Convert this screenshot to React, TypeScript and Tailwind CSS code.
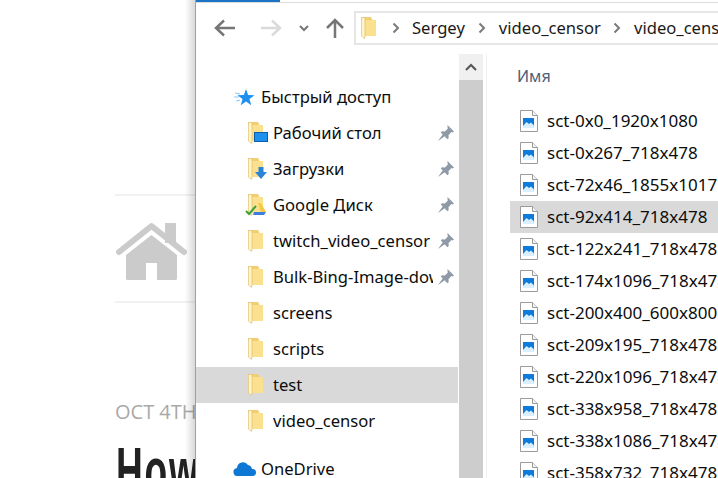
const UI_FONT = { fontFamily: '"Noto Sans", "Open Sans", sans-serif' };

function FolderIcon() {
  return (
    <svg width="15" height="22" viewBox="0 0 15 22" className="shrink-0">
      <path d="M0 0h10l1.500 3H15v16H4z" fill="#f0cf74" />
      <path d="M4 3h11v16H4z" fill="#fbe08f" />
      <path d="M.4.500h3.600v18.500l-.4 2.500L.4 19z" fill="#fff3cc" stroke="#e3c470" strokeWidth="0.8" />
    </svg>
  );
}

function PinIcon() {
  return (
    <svg width="16" height="16" viewBox="0 0 16 16" className="shrink-0">
      <path d="M9.500 0 16 6.500l-1.200 1-1.300-.4-3 3 .2 2.900-1.200 1.200-6.700-6.700L4 6.300l2.900.2 3-3-.4-1.300z" fill="#8f9aa6" />
      <path d="M5 9 0 16l7-5z" fill="#8f9aa6" />
    </svg>
  );
}

function FileIcon() {
  return (
    <svg width="18" height="22" viewBox="0 0 18 22" className="shrink-0">
      <path d="M.5.500h12l5 5v16H.500z" fill="#fff" stroke="#9b9b9b" />
      <path d="M12.500.500v5h5" fill="#f1f1f1" stroke="#9b9b9b" />
      <rect x="3" y="8" width="11" height="10" fill="#0f7bd9" />
      <path d="M3 16l3.500-4 2.500 2 2-1.500 3 3V18H3z" fill="#d9efff" />
    </svg>
  );
}

function Chevron({ className }: { className?: string }) {
  return (
    <svg width="8" height="12" viewBox="0 0 8 12" fill="none" stroke="#7a7a7a" strokeWidth="2" className={`shrink-0 ${className ?? ''}`}>
      <path d="m1.500 1.500 4.500 4.500-4.500 4.500" />
    </svg>
  );
}

function NavRow({ label, icon, pinned, selected }: { label: string; icon?: React.ReactNode; pinned?: boolean; selected?: boolean }) {
  return (
    <div className={`flex h-9 shrink-0 items-center pl-[52px] pr-[4px] ${selected ? 'bg-[#d9d9d9]' : ''}`}>
      <span className="flex w-[25px] shrink-0 items-center">{icon ?? <FolderIcon />}</span>
      <span className="mr-[5px] flex-1 overflow-hidden whitespace-nowrap text-[16.6px] text-[#0c0c0c]">{label}</span>
      {pinned && <PinIcon />}
    </div>
  );
}

const files = [
  'sct-0x0_1920x1080',
  'sct-0x267_718x478',
  'sct-72x46_1855x1017',
  'sct-92x414_718x478',
  'sct-122x241_718x478',
  'sct-174x1096_718x478',
  'sct-200x400_600x800',
  'sct-209x195_718x478',
  'sct-220x1096_718x478',
  'sct-338x958_718x478',
  'sct-338x1086_718x478',
  'sct-358x732_718x478',
];

export default function App() {
  return (
    <div className="flex h-[478px] w-[718px] overflow-hidden bg-white" style={UI_FONT}>
      {/* page behind the explorer window */}
      <div className="w-[195px] shrink-0 overflow-hidden pl-[115px] pt-[194px]">
        <div className="flex h-[109px] items-center border-y-2 border-[#f1f1f1] pl-px pt-[5px]">
          <svg width="71" height="58" viewBox="0 0 71 58">
            <path d="M3 30 35.500 4 68 30" fill="none" stroke="#cbcbcb" strokeWidth="6" strokeLinecap="round" strokeLinejoin="round" />
            <path d="M49 1h11v20H49z" fill="#cbcbcb" />
            <path d="M10 33 35.500 13 61 33v23.500a1.500 1.500 0 0 1-1.500 1.500H41V41H30v17H11.500A1.500 1.500 0 0 1 10 56.500z" fill="#cbcbcb" />
          </svg>
        </div>
        <div className="mt-[97px] whitespace-nowrap text-[20px] leading-6 text-[#a9a9a9]" style={{ fontFamily: '"Open Sans", sans-serif' }}>OCT 4TH</div>
        <div className="ml-px mt-[11px] origin-left scale-x-[0.58] whitespace-nowrap text-[64px] font-bold leading-[72px] tracking-[3px] text-[#222]" style={{ fontFamily: '"Liberation Sans", sans-serif' }}>How</div>
      </div>

      {/* explorer window */}
      <div className="relative flex flex-1 flex-col border-l border-[#a0a0a0]">
        <div className="absolute inset-y-0 -left-[11px] w-[10px] bg-gradient-to-r from-transparent to-black/15" />
        <div className="h-[2px] w-[84px] bg-[#1a73c4]" />
        <div className="h-px bg-[#dcdcdc]" />
        <div className="mt-[8px] flex h-[34px] shrink-0 items-center">
          <div className="flex w-[158px] shrink-0 items-center pl-[18px]">
            <svg width="22" height="18" viewBox="0 0 22 18" fill="none" stroke="#767676" strokeWidth="2.500">
              <path d="M21 9H2M10 1.500 2 9l8 7.500" />
            </svg>
            <svg width="22" height="18" viewBox="0 0 22 18" fill="none" stroke="#dadada" strokeWidth="2.500" className="ml-[24px]">
              <path d="M1 9h19M12 1.500 20 9l-8 7.500" />
            </svg>
            <svg width="10" height="7" viewBox="0 0 10 7" fill="none" stroke="#767676" strokeWidth="2" className="ml-[17px]">
              <path d="m1 1 4 4 4-4" />
            </svg>
            <svg width="18" height="20" viewBox="0 0 18 20" fill="none" stroke="#767676" strokeWidth="2.500" className="ml-[17px]">
              <path d="M9 20V2M1 10l8-8 8 8" />
            </svg>
          </div>
          <div className="flex h-[34px] flex-1 items-center overflow-hidden whitespace-nowrap border-y-2 border-l-2 border-[#e5e5e5] pl-[5px] text-[16.6px] text-[#1a1a1a]">
            <FolderIcon />
            <Chevron className="ml-[16px] mr-[12px]" />
            <span>Sergey</span>
            <Chevron className="ml-[13px] mr-[13px]" />
            <span>video_censor</span>
            <Chevron className="ml-[12px] mr-[13px]" />
            <span>video_censor</span>
          </div>
        </div>

        <div className="flex min-h-0 flex-1 pt-[9px]">
          <div className="flex w-[262px] shrink-0 flex-col pt-[25px]">
            <div className="flex h-9 shrink-0 items-center pl-[38px]">
              <svg width="22" height="18" viewBox="0 0 22 18" className="mr-[5px] shrink-0">
                <path d="M12 1l2.100 6.100 6.500.1-5.200 3.900 1.900 6.200-5.300-3.700-5.300 3.700 1.900-6.200-5.200-3.900 6.500-.1z" fill="#1e90ee" />
                <path d="M1 5l5 1M0 9h5M2 13l4-1" stroke="#8cc8f5" fill="none" />
              </svg>
              <span className="text-[16.6px] text-[#0c0c0c]">Быстрый доступ</span>
            </div>
            <NavRow label="Рабочий стол" pinned icon={
              <span className="relative block h-[22px] w-[15px]">
                <FolderIcon />
                <span className="absolute bottom-[2px] left-[6px] h-[10px] w-[14px] border border-[#0b5fa8] bg-[#1e90ee]" />
              </span>
            } />
            <NavRow label="Загрузки" pinned icon={
              <span className="relative block h-[22px] w-[15px]">
                <FolderIcon />
                <svg width="12" height="12" viewBox="0 0 12 12" className="absolute bottom-[1px] left-[7px]">
                  <path d="M3.500 0h5v5H12l-6 7-6-7h3.500z" fill="#2a83d8" />
                </svg>
              </span>
            } />
            <NavRow label="Google Диск" pinned icon={
              <span className="relative block h-[22px] w-[15px]">
                <FolderIcon />
                <svg width="22" height="16" viewBox="0 0 22 16" className="absolute -left-[3px] bottom-0">
                  <path d="M13 3h3l5 9h-5z" fill="#f7c93e" />
                  <path d="M9 12h12l-2 3H8z" fill="#3c7de0" />
                  <path d="M1 11l3 3 7-8" fill="none" stroke="#3aa43a" strokeWidth="2" />
                </svg>
              </span>
            } />
            <NavRow label="twitch_video_censor" pinned />
            <NavRow label="Bulk-Bing-Image-downloader" pinned />
            <NavRow label="screens" />
            <NavRow label="scripts" />
            <NavRow label="test" selected />
            <NavRow label="video_censor" />
            <div className="mt-[12px] flex h-9 shrink-0 items-center pl-[37px]">
              <svg width="24" height="16" viewBox="0 0 24 16" className="mr-[4px] shrink-0">
                <path d="M5 15a4 4 0 0 1-1-8 6 6 0 0 1 11-3 5 5 0 0 1 4 4 3.500 3.500 0 0 1 1 7z" fill="#0f78d4" />
              </svg>
              <span className="text-[16.6px] text-[#0c0c0c]">OneDrive</span>
            </div>
          </div>

          <div className="ml-px flex w-[24px] shrink-0 flex-col bg-[#cdcdcd]">
            <div className="flex h-[26px] items-center justify-center bg-[#f0f0f0]">
              <svg width="12" height="8" viewBox="0 0 12 8" fill="none" stroke="#555" strokeWidth="2">
                <path d="m1 7 5-5 5 5" />
              </svg>
            </div>
          </div>

          <div className="ml-[3px] flex-1 overflow-hidden border-l border-[#f0f0f0] pl-[23px]">
            <div className="pl-[7px] pt-[10px] text-[16px] leading-6 text-[#4c607a]">Имя</div>
            <div className="mt-[17px] flex flex-col">
              {files.map((name, i) => (
                <div key={name} className={`flex h-8 shrink-0 items-center gap-[9px] whitespace-nowrap pl-[10px] text-[17px] text-[#0c0c0c] ${i === 3 ? 'bg-[#d9d9d9]' : ''}`}>
                  <FileIcon />
                  <span>{name}</span>
                </div>
              ))}
            </div>
          </div>
        </div>
      </div>
    </div>
  );
}
